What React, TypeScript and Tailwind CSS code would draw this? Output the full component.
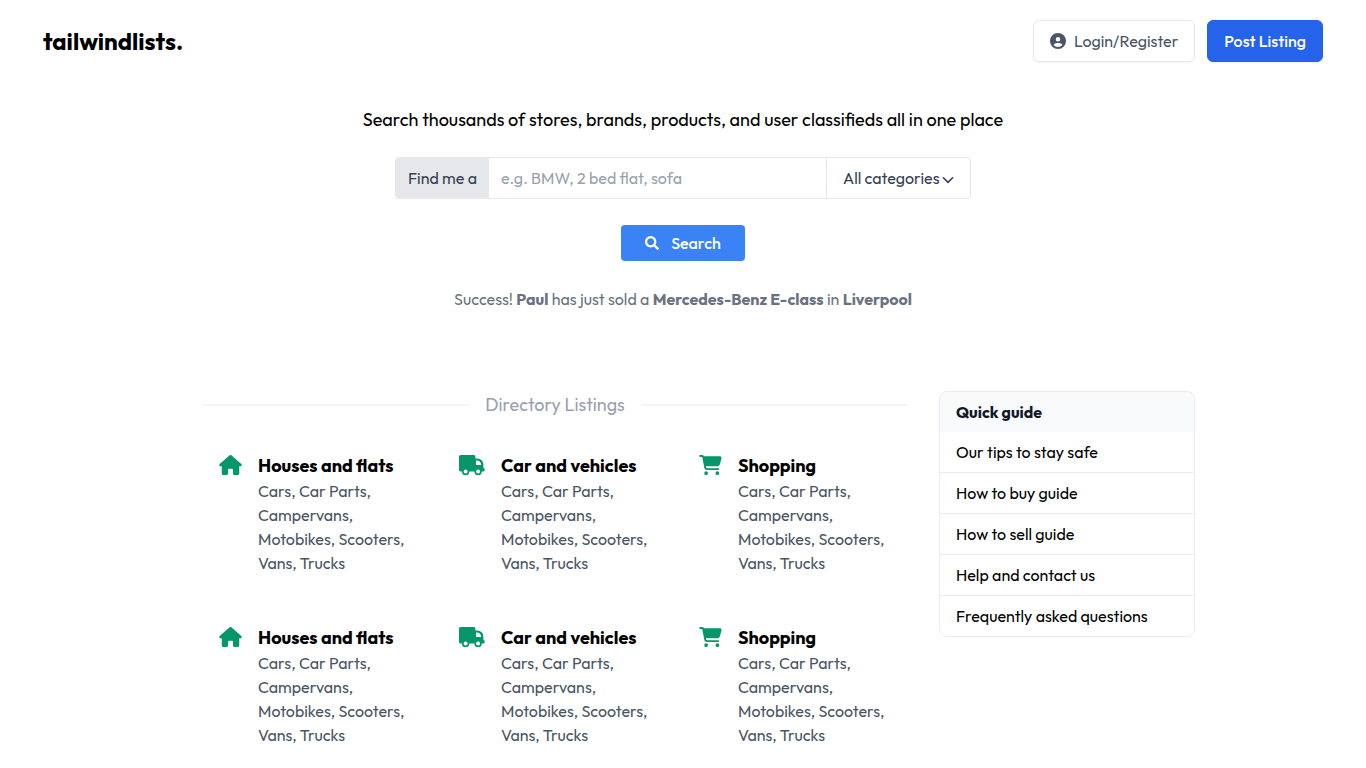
import type { ComponentType } from "react";
import { FaCartShopping, FaCircleUser, FaHouse } from "react-icons/fa6";
import { FaSearch } from "react-icons/fa";

type IconProps = { className?: string };
type Category = { title: string; icon: ComponentType<IconProps>; iconClass: string };

function DeliveryTruck({ className }: IconProps) {
  return (
    <svg viewBox="0 0 26 20" fill="currentColor" className={className} aria-hidden="true">
      <path
        fillRule="evenodd"
        d="M1.6 0H14.9a1.5 1.5 0 0 1 1.5 1.5V3.5h2.1a5.9 5.9 0 0 1 5.9 5.9v3.4c.8.2 1.2.7 1.2 1.3v1.1c0 .9-.6 1.4-1.4 1.4h-1.4a3.7 3.7 0 0 1-7.4 0H10.3a3.7 3.7 0 0 1-7.4 0H1.6A1.6 1.6 0 0 1 0 15V1.6A1.6 1.6 0 0 1 1.6 0ZM17 5.6v4.3h5.2c-.2-2.6-1.8-4.3-4.2-4.3ZM6.6 14.4a2 2 0 1 0 0 4 2 2 0 0 0 0-4ZM19.1 14.4a2 2 0 1 0 0 4 2 2 0 0 0 0-4Z"
      />
    </svg>
  );
}

function ChevronDown({ className }: IconProps) {
  return (
    <svg viewBox="0 0 12 12" fill="none" stroke="currentColor" strokeWidth="1.6" strokeLinecap="round" strokeLinejoin="round" className={className} aria-hidden="true">
      <path d="M1.4 3.8 6 8.4l4.6-4.6" />
    </svg>
  );
}

const categories: Category[] = [
  { title: "Houses and flats", icon: FaHouse, iconClass: "w-[23px]" },
  { title: "Car and vehicles", icon: DeliveryTruck, iconClass: "w-[26px]" },
  { title: "Shopping", icon: FaCartShopping, iconClass: "w-[23px]" },
  { title: "Houses and flats", icon: FaHouse, iconClass: "w-[23px]" },
  { title: "Car and vehicles", icon: DeliveryTruck, iconClass: "w-[26px]" },
  { title: "Shopping", icon: FaCartShopping, iconClass: "w-[23px]" },
];

const guides = [
  "Our tips to stay safe",
  "How to buy guide",
  "How to sell guide",
  "Help and contact us",
  "Frequently asked questions",
];

function Header() {
  return (
    <header className="mx-auto flex w-full max-w-7xl items-center justify-between py-5">
      <a href="#" className="text-2xl font-bold">
        tailwindlists.
      </a>
      <div className="flex gap-3">
        <button className="flex items-center gap-2 rounded-md border border-gray-200 px-4 py-2 text-gray-600 shadow-xs">
          <FaCircleUser className="size-4" />
          Login/Register
        </button>
        <button className="rounded-md border border-[#2563eb] bg-[#2563eb] px-4 py-2 font-medium text-white shadow-xs">
          Post Listing
        </button>
      </div>
    </header>
  );
}

function Search() {
  return (
    <section className="flex flex-col items-center pt-6 text-center">
      <p className="text-lg">
        Search thousands of stores, brands, products, and user classifieds all in one place
      </p>
      <form className="flex w-full max-w-xl flex-col items-center pt-[23px]" onSubmit={(e) => e.preventDefault()}>
        <div className="flex w-full overflow-hidden rounded border border-gray-200 text-gray-700">
          <label htmlFor="query" className="bg-gray-200 px-3 py-2 whitespace-nowrap">
            Find me a
          </label>
          <input
            id="query"
            type="text"
            placeholder="e.g. BMW, 2 bed flat, sofa"
            className="min-w-0 flex-1 px-3 py-2 outline-none placeholder:text-gray-400"
          />
          <div className="relative flex border-l border-gray-200">
            <select aria-label="Category" className="appearance-none bg-transparent py-2 pr-[30px] pl-4 outline-none">
              <option>All categories</option>
            </select>
            <ChevronDown className="pointer-events-none absolute top-4 right-4 size-3" />
          </div>
        </div>
        <button className="mt-[26px] flex items-center gap-3 rounded-sm bg-[#3b82f6] px-6 py-1.5 font-medium text-white">
          <FaSearch className="size-3.5" />
          Search
        </button>
      </form>
      <p className="pt-[26px] text-gray-500">
        Success! <b>Paul</b> has just sold a <b>Mercedes-Benz E-class</b> in <b>Liverpool</b>
      </p>
    </section>
  );
}

function Directory() {
  return (
    <section className="flex-1 px-8">
      <div className="flex items-center gap-4">
        <div className="h-0.5 flex-1 bg-gray-100" />
        <h2 className="text-lg text-gray-400">Directory Listings</h2>
        <div className="h-0.5 flex-1 bg-gray-100" />
      </div>
      <div className="grid grid-cols-3 gap-4 pt-4">
        {categories.map(({ title, icon: Icon, iconClass }, i) => (
          <a key={i} href="#" className="flex gap-4 p-4">
            <Icon className={`mt-1 h-5 shrink-0 text-[#059669] ${iconClass}`} />
            <div>
              <h3 className="pt-px text-lg leading-[27px] font-bold whitespace-nowrap">{title}</h3>
              <p className="text-gray-600">Cars, Car Parts, Campervans, Motobikes, Scooters, Vans, Trucks</p>
            </div>
          </a>
        ))}
      </div>
    </section>
  );
}

function QuickGuide() {
  return (
    <aside className="w-64 self-start overflow-hidden rounded-lg border border-[#ebecef]">
      <h2 className="bg-gray-50 px-4 py-2 font-bold text-gray-900">Quick guide</h2>
      <ul className="divide-y divide-[#ebecef]">
        {guides.map((guide) => (
          <li key={guide}>
            <a href="#" className="block px-4 py-2">
              {guide}
            </a>
          </li>
        ))}
      </ul>
    </aside>
  );
}

export default function App() {
  return (
    <div className="min-h-screen bg-white font-['Outfit','Lato',sans-serif] text-black">
      <Header />
      <main>
        <Search />
        <div className="mx-auto flex max-w-5xl pt-20">
          <Directory />
          <QuickGuide />
        </div>
      </main>
    </div>
  );
}
